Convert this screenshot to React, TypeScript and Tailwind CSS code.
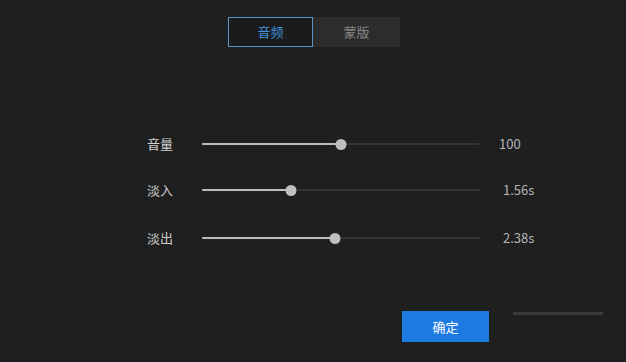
import React from 'react';

const font = { fontFamily: '"Noto Sans CJK SC", "Liberation Sans", sans-serif' };

const rows = [
  { label: '音量', pct: 50, value: '100', valueMl: 'ml-[19px]', mt: 'mt-[85px]' },
  { label: '淡入', pct: 32, value: '1.56s', valueMl: 'ml-[23px]', mt: 'mt-[22px]' },
  { label: '淡出', pct: 48, value: '2.38s', valueMl: 'ml-[23px]', mt: 'mt-[24px]' },
];

const Slider: React.FC<{ pct: number }> = ({ pct }) => (
  <div className="relative w-[278px] h-[11px] flex items-center">
    <div className="w-full h-[2px] bg-[#333333] rounded-full">
      <div className="h-full bg-[#bdbdbd] rounded-full" style={{ width: `${pct}%` }} />
    </div>
    <div
      className="absolute top-0 w-[11px] h-[11px] rounded-full bg-[#bfbfbf] -translate-x-1/2"
      style={{ left: `${pct}%` }}
    />
  </div>
);

export default function App() {
  return (
    <div className="w-[626px] h-[362px] bg-[#1f1f1f] flex flex-col overflow-hidden" style={font}>
      {/* tabs */}
      <div className="flex justify-center pt-[17px]">
        <div className="flex h-[30px] ml-[2px]">
          <div className="w-[85px] border border-[#5b93c4] bg-[#1b1b1b] flex items-center justify-center text-[13px] text-[#3f92dc]">
            音频
          </div>
          <div className="w-[87px] bg-[#2c2c2c] flex items-center justify-center text-[13px] text-[#858585]">
            蒙版
          </div>
        </div>
      </div>

      {/* sliders */}
      {rows.map(r => (
        <div key={r.label} className={`flex items-center h-[24px] pl-[147px] ${r.mt}`}>
          <span className="w-[55px] text-[13px] text-[#cfcfcf]">{r.label}</span>
          <Slider pct={r.pct} />
          <span className={`${r.valueMl} text-[13px] text-[#b5b5b5]`}>{r.value}</span>
        </div>
      ))}

      {/* footer */}
      <div className="flex items-start pl-[402px] mt-[61px]">
        <button className="w-[87px] h-[31px] bg-[#1d7ae3] text-white text-[13px] flex items-center justify-center">
          确定
        </button>
        <div className="ml-[24px] mt-[1px] w-[90px] h-[3px] bg-[#3a3a3a]" />
      </div>
    </div>
  );
}
